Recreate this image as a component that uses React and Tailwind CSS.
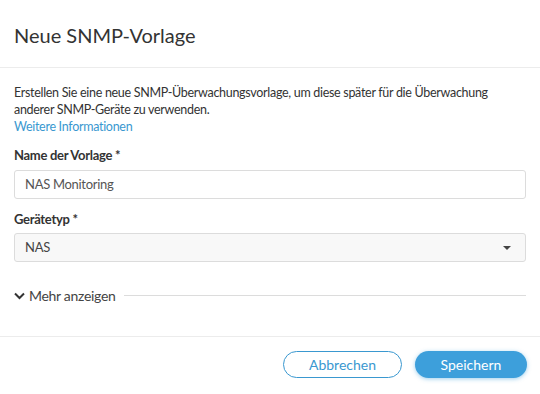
export default function App() {
  return (
    <div
      className="w-[540px] h-[394px] bg-white flex flex-col text-[#333]"
      style={{ fontFamily: 'Lato, "Noto Sans", sans-serif' }}
    >
      <div className="h-[68px] flex items-center px-[14px] border-b border-[#ececec]">
        <h1 className="text-[20px] leading-none text-[#333] pt-[2px]">Neue SNMP-Vorlage</h1>
      </div>

      <div className="flex flex-col px-[14px] pt-[16px]">
        <p className="text-[12.5px] tracking-[-0.3px] leading-[17px]">
          Erstellen Sie eine neue SNMP-Überwachungsvorlage, um diese später für die Überwachung anderer SNMP-Geräte zu verwenden.
          <br />
          <a href="#" className="text-[#3a98d0]">Weitere Informationen</a>
        </p>

        <label className="mt-[12px] text-[13px] tracking-[-0.3px] font-bold leading-[17px]">Name der Vorlage *</label>
        <div className="mt-[6px] h-[29px] w-[512px] rounded-[3px] border border-[#dcdcdc] flex items-center px-[10px] text-[13px] tracking-[-0.3px] text-[#555]">
          NAS Monitoring
        </div>

        <label className="mt-[12px] text-[13px] tracking-[-0.3px] font-bold leading-[17px]">Gerätetyp *</label>
        <div className="mt-[5px] h-[29px] w-[512px] rounded-[3px] border border-[#dcdcdc] bg-[#f8f8f8] flex items-center justify-between px-[10px] text-[13px] tracking-[-0.3px] text-[#444]">
          <span>NAS</span>
          <svg width="8" height="4" viewBox="0 0 8 4" className="mr-[4px]">
            <path d="M0 0h8L4 4z" fill="#444" />
          </svg>
        </div>

        <div className="mt-[23px] flex items-center gap-[8px] w-[512px]">
          <div className="flex items-center gap-[4px] text-[14px] tracking-[-0.3px] text-[#444]">
            <svg width="11" height="8" viewBox="0 0 11 8">
              <path d="M1 1.5l4.5 4.5L10 1.5" stroke="#333" strokeWidth="2" fill="none" />
            </svg>
            <span>Mehr anzeigen</span>
          </div>
          <div className="flex-1 h-px bg-[#dcdcdc]" />
        </div>
      </div>

      <div className="mt-[30px] border-t border-[#ececec] flex justify-end gap-[13px] px-[13px] pt-[14px]">
        <button className="w-[119px] h-[27px] rounded-full border border-[#3a98d0] text-[#3a98d0] text-[14px] bg-white">
          Abbrechen
        </button>
        <button className="w-[112px] h-[27px] rounded-full bg-[#3d9fdb] text-white text-[14px] shadow-[0_1px_4px_rgba(61,159,219,0.5)]">
          Speichern
        </button>
      </div>
    </div>
  )
}
